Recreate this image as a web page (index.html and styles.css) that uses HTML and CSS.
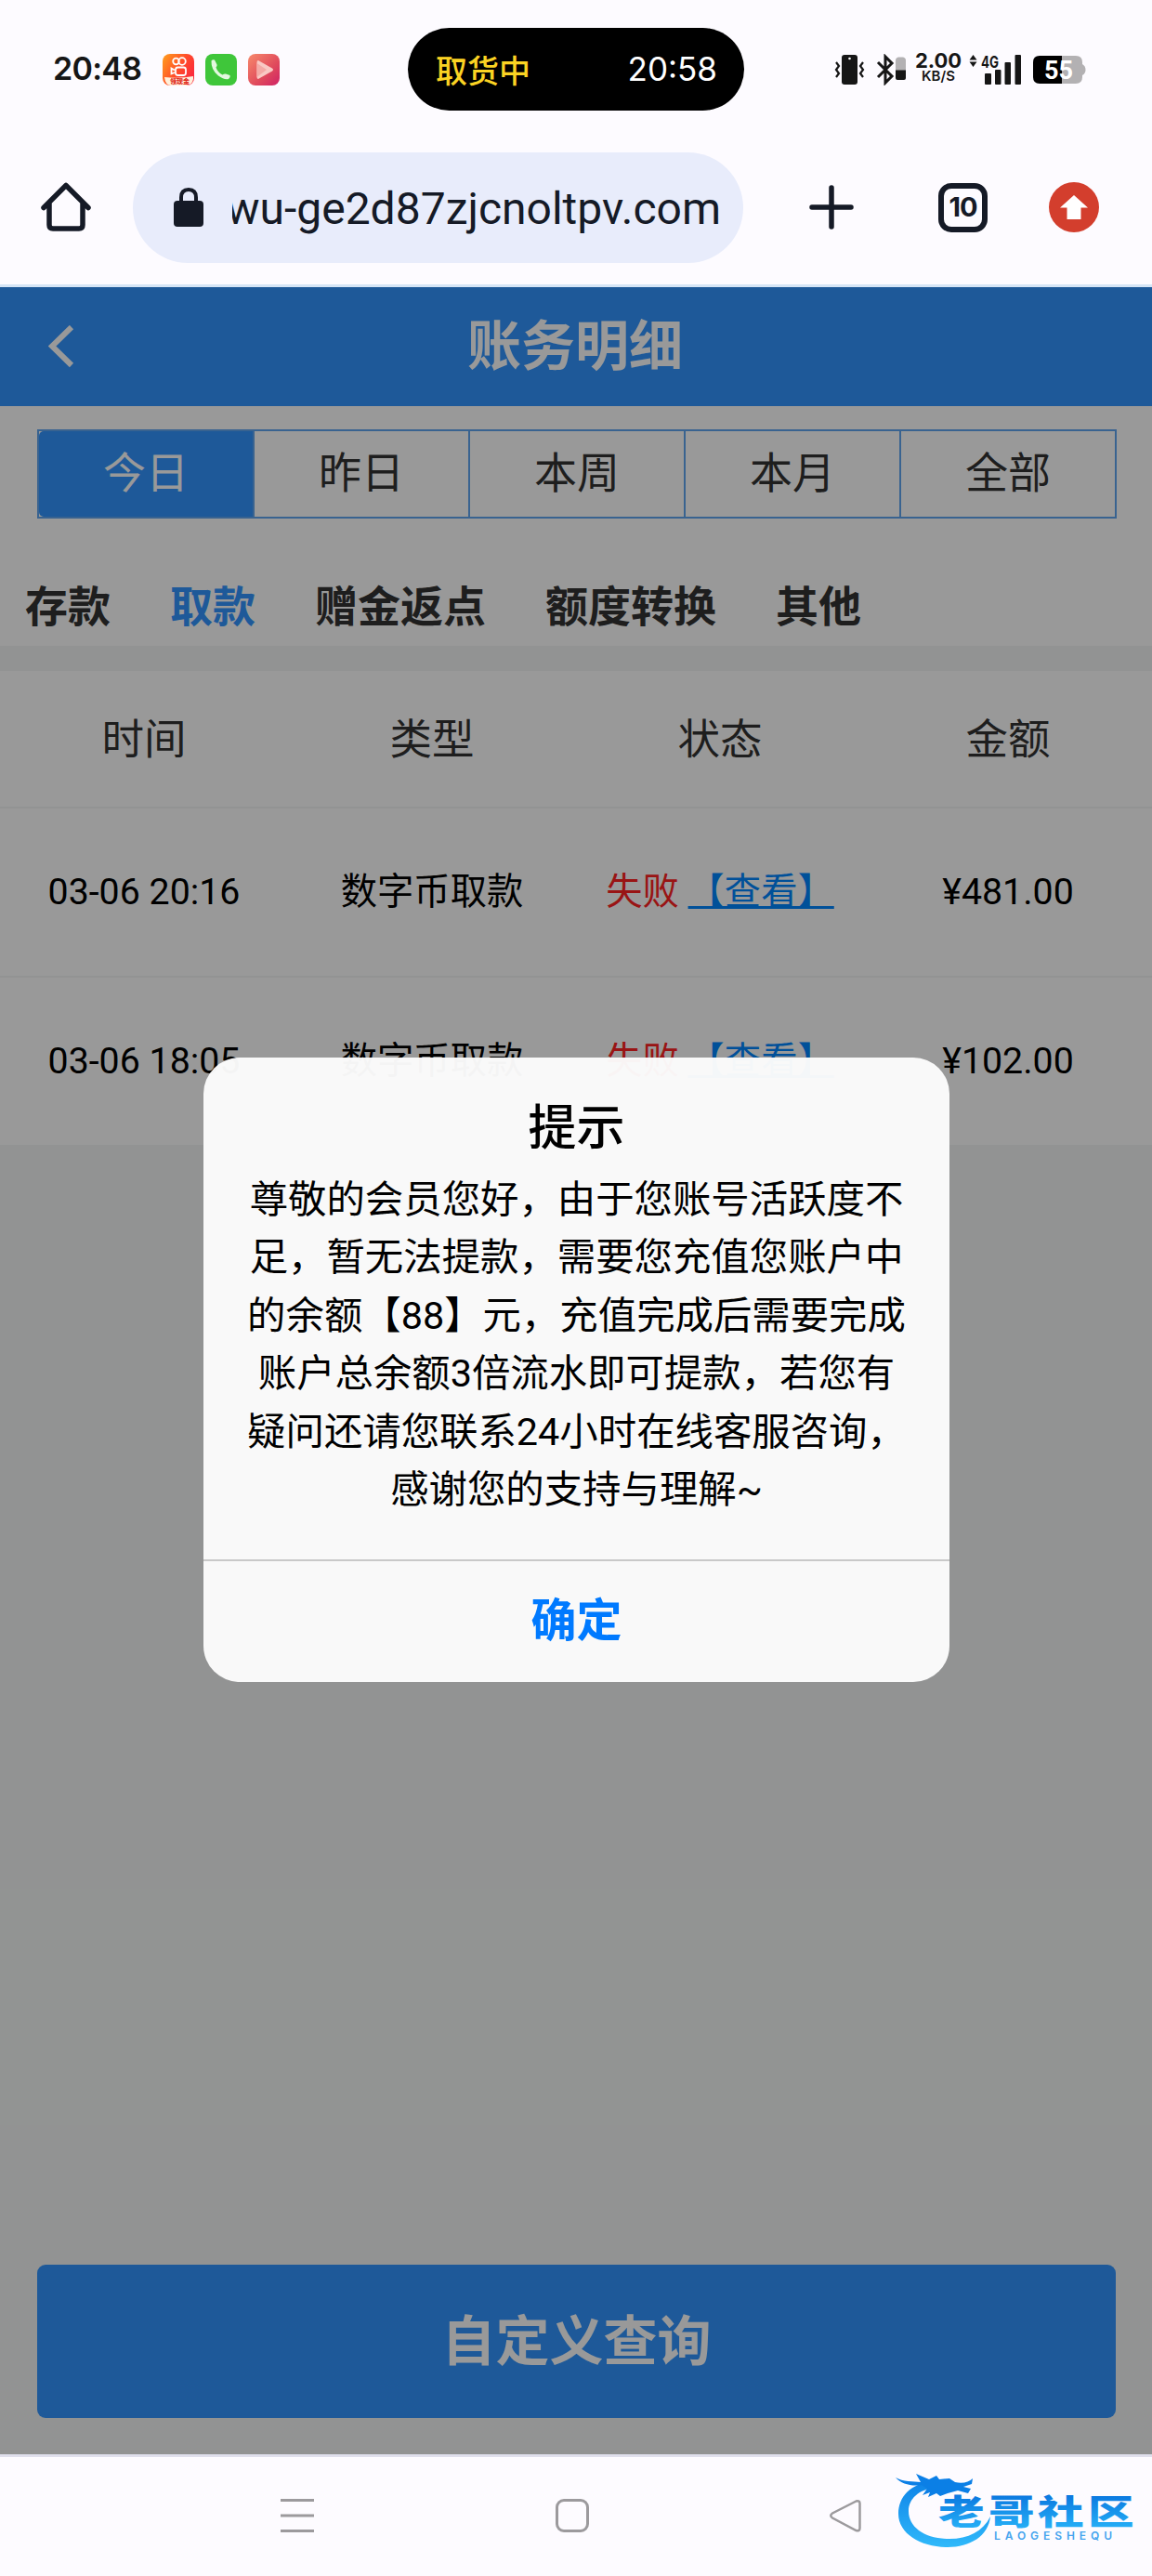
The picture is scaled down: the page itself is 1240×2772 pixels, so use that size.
FILE: index.html
```html
<!DOCTYPE html>
<html lang="zh-CN">
<head>
    <meta charset="UTF-8">
    <meta name="viewport" content="width=device-width, initial-scale=1.0">
    <title>账务明细</title>
    <link rel="stylesheet" href="styles.css">
</head>
<body>
    <div class="status-bar">
        <div class="status-left">
            <span class="clock">20:48</span>
            <svg class="app-icon" viewBox="0 0 34 34">
                <defs>
                    <linearGradient id="orange" x1="0" y1="0" x2="1" y2="0.6">
                        <stop offset="0" stop-color="#ffa01e"/>
                        <stop offset="0.6" stop-color="#ff4b2a"/>
                        <stop offset="1" stop-color="#fb2b3c"/>
                    </linearGradient>
                </defs>
                <rect width="34" height="34" rx="8" fill="url(#orange)"/>
                <g fill="none" stroke="#fff" stroke-width="1.8">
                    <circle cx="14.500" cy="8" r="3.300"/>
                    <circle cx="21" cy="8" r="3.800"/>
                    <rect x="14" y="14.500" width="11" height="8.500" rx="2.500"/>
                    <path d="M13 17.500L9.500 15.500V21.500L13 20"/>
                </g>
                <path d="M2 25Q18 27 33 24V27Q32 34 25 34H9Q3 34 2 25Z" fill="#fff0dc"/>
                <text x="8" y="32" class="app-label">领现金</text>
            </svg>
            <svg class="app-icon" viewBox="0 0 34 34">
                <rect width="34" height="34" rx="8" fill="#3fc63a"/>
                <path d="M6.500 7.500Q8 5.500 10 6.500L12.500 11.500Q13 13 11.500 14.500Q13 19.500 18.500 22.500Q20.500 21 22 21.500L26.500 23Q27.500 25 25 27Q20 28 14 23.500Q6 17 6.500 7.500Z" fill="#e3f8df"/>
            </svg>
            <svg class="app-icon" viewBox="0 0 34 34">
                <defs>
                    <linearGradient id="rose" x1="0" y1="0" x2="1" y2="1">
                        <stop offset="0" stop-color="#f78a6c"/>
                        <stop offset="0.600" stop-color="#e04a5c"/>
                        <stop offset="1" stop-color="#cf2266"/>
                    </linearGradient>
                </defs>
                <rect width="34" height="34" rx="8" fill="url(#rose)"/>
                <path d="M11 7L26 15.500Q28 17 26 18.500L11 27Q9.500 27 9.500 25V9Q9.500 7 11 7Z" fill="#f9c9c4"/>
                <path d="M9.500 10L20 17L9.500 25Z" fill="#f4aaa6"/>
            </svg>
        </div>

        <div class="island">
            <span class="island-label">取货中</span>
            <span class="island-time">20:58</span>
        </div>

        <div class="status-right">
            <svg width="33" height="34" viewBox="0 0 33 34">
                <rect x="8" y="1" width="17" height="32" rx="3" fill="#161616"/>
                <circle cx="16.500" cy="5" r="1.300" fill="#fff"/>
                <path d="M2 9L5 13L2 17L5 21L2 25M31 9L28 13L31 17L28 21L31 25" fill="none" stroke="#161616" stroke-width="2.200"/>
            </svg>
            <svg class="bluetooth" width="32" height="34" viewBox="0 0 32 34">
                <path d="M2 9L17 24L10 31V3L17 10L2 25" fill="none" stroke="#161616" stroke-width="3"/>
                <path d="M24 3.500H29Q32 4 32 7V18H21V7Q21 4 24 3.500Z" fill="#b3b1b3"/>
                <path d="M21 17.500H32V26Q32 28 30 28H23Q21 28 21 26Z" fill="#161616"/>
            </svg>
            <div class="net-speed">
                <span class="speed-value">2.00</span>
                <span class="speed-unit">KB/S</span>
            </div>
            <svg class="signal" width="57" height="34" viewBox="0 0 57 34">
                <path d="M0.500 6.500L4.500 1L8.500 6.500ZM0.500 8.500L4.500 14L8.500 8.500Z" fill="#161616"/>
                <text x="13" y="14.500" class="net-type" textLength="19" lengthAdjust="spacingAndGlyphs">4G</text>
                <rect x="17" y="21" width="7" height="12" rx="1" fill="#161616"/>
                <rect x="28" y="17" width="6.500" height="16" rx="1" fill="#161616"/>
                <rect x="38.500" y="9" width="6.500" height="24" rx="1" fill="#161616"/>
                <rect x="49.500" y="1" width="6.500" height="32" rx="1" fill="#161616"/>
            </svg>
            <svg class="battery" width="57" height="30" viewBox="0 0 57 30">
                <path d="M31 0H46Q53 0 53 7V9Q56.500 11 56.500 15T53 21V23Q53 30 46 30H31Z" fill="#b3b1b3"/>
                <path d="M31 0H7Q0 0 0 7V23Q0 30 7 30H31Z" fill="#000"/>
                <text x="27.500" y="24.500" text-anchor="middle" class="battery-text">55</text>
            </svg>
        </div>
    </div>

    <div class="browser-bar">
        <svg class="home" width="56" height="56" viewBox="0 0 56 56" fill="none" stroke="#151a26" stroke-width="5.500" stroke-linejoin="round" stroke-linecap="round">
            <path d="M4 28.500L28 4.500L52 28.500M10 24V47Q10 51 14 51H42Q46 51 46 47V24"/>
        </svg>
        <div class="url-pill">
            <svg width="32" height="42" viewBox="0 0 32 42">
                <rect x="0" y="14" width="32" height="28" rx="4" fill="#151a26"/>
                <path d="M8 15V10.500Q8 2 16 2T24 10.500V15" fill="none" stroke="#151a26" stroke-width="4"/>
            </svg>
            <div class="url"><span>wu-ge2d87zjcnoltpv.com</span></div>
        </div>
        <svg class="new-tab" width="48" height="48" viewBox="0 0 48 48" stroke="#151a26" stroke-width="5.500" stroke-linecap="round">
            <path d="M24 3V45M3 24H45"/>
        </svg>
        <div class="tab-count">10</div>
        <svg class="update" width="54" height="54" viewBox="0 0 54 54">
            <circle cx="27" cy="27" r="27" fill="#d33e2d"/>
            <path d="M27 14L42 27.500H34.500V40H19.500V27.500H12Z" fill="#fff"/>
        </svg>
    </div>

    <div class="page">
        <div class="header">
            <svg class="back" width="30" height="46" viewBox="0 0 30 46">
                <path d="M25 2L4 22.500L25 43" fill="none" stroke="#fff" stroke-width="6"/>
            </svg>
            <h1>账务明细</h1>
        </div>

        <div class="filters">
            <div class="ranges">
                <div class="range active">今日</div>
                <div class="range">昨日</div>
                <div class="range">本周</div>
                <div class="range">本月</div>
                <div class="range">全部</div>
            </div>
            <div class="tabs">
                <span>存款</span>
                <span class="active">取款</span>
                <span>赠金返点</span>
                <span>额度转换</span>
                <span>其他</span>
            </div>
        </div>

        <div class="records">
            <div class="row row-head">
                <div>时间</div>
                <div>类型</div>
                <div>状态</div>
                <div>金额</div>
            </div>
            <div class="row">
                <div>03-06 20:16</div>
                <div>数字币取款</div>
                <div><span class="failed">失败</span> <a class="view">【查看】</a></div>
                <div>¥481.00</div>
            </div>
            <div class="row">
                <div>03-06 18:05</div>
                <div>数字币取款</div>
                <div><span class="failed">失败</span> <a class="view">【查看】</a></div>
                <div>¥102.00</div>
            </div>
        </div>

        <div class="query-btn">自定义查询</div>

        <div class="overlay">
            <div class="modal">
                <h2>提示</h2>
                <p>尊敬的会员您好，由于您账号活跃度不<br>足，暂无法提款，需要您充值您账户中<br>的余额【88】元，充值完成后需要完成<br>账户总余额3倍流水即可提款，若您有<br>疑问还请您联系24小时在线客服咨询，<br>感谢您的支持与理解~</p>
                <div class="confirm">确定</div>
            </div>
        </div>
    </div>

    <div class="nav-bar">
        <svg class="nav-menu" width="36" height="36" viewBox="0 0 36 36" stroke="#9c9a9d" stroke-width="3">
            <path d="M0 1.500H36M0 18H36M0 34.500H36"/>
        </svg>
        <div class="nav-home"></div>
        <svg class="nav-back" width="36" height="36" viewBox="0 0 36 36">
            <path d="M29.500 2.500L4 15.500Q0.500 18 4 20.500L29.500 34Q33.500 35 33.500 31.500V5Q33.500 1.500 29.500 2.500Z" fill="none" stroke="#9c9a9d" stroke-width="2.500"/>
        </svg>
        <svg class="logo" width="264" height="98" viewBox="0 0 264 98">
            <defs>
                <linearGradient id="sea" gradientUnits="userSpaceOnUse" x1="0" y1="15" x2="0" y2="90">
                    <stop offset="0" stop-color="#0b7fe6"/>
                    <stop offset="1" stop-color="#2fb8fa"/>
                </linearGradient>
                <linearGradient id="word" x1="0" y1="0" x2="0" y2="1">
                    <stop offset="0.200" stop-color="#0b78df"/>
                    <stop offset="0.900" stop-color="#27b2f8"/>
                </linearGradient>
            </defs>
            <path d="M45 20C20 22 7 37 7 55C7 77 32 91 60 91C84 91 104 79 106 58C98 74 82 82 62 82C36 82 18 70 18 52C18 39 29 29 46 27Z" fill="url(#sea)"/>
            <path d="M4 16C12 21 23 20 31 21L26 12L40 18L48 14L51 18L62 17L68 21C76 23 83 21 87 17L86 23L77 26L85 28L82 33L71 30L60 33L52 36L48 33L39 37L41 32L33 35L38 28L32 24C22 26 10 23 4 16Z" fill="#0b7fe6"/>
            <g class="logo-text" fill="url(#word)">
                <text transform="translate(50 67) scale(1.340 1)">老</text>
                <text transform="translate(104 67) scale(1.340 1)">哥</text>
                <text transform="translate(157 67) scale(1.340 1)">社</text>
                <text transform="translate(211 67) scale(1.340 1)">区</text>
            </g>
            <text x="110" y="82.500" class="logo-sub" textLength="127">LAOGESHEQU</text>
        </svg>
    </div>
</body>
</html>
```
FILE: styles.css
```css
* {
    box-sizing: border-box;
}
body {
    margin: 0;
    width: 1240px;
    height: 2772px;
    background: #fdfbff;
    font-family: Roboto, "Noto Sans CJK SC", sans-serif;
    overflow: hidden;
}
svg {
    display: block;
    flex-shrink: 0;
}

/* status bar */
.status-bar {
    display: flex;
    height: 149px;
    padding-top: 30px;
}
.status-left {
    display: flex;
    align-items: center;
    width: 439px;
    height: 89px;
    padding-left: 57px;
}
.clock {
    width: 118px;
    font: 600 34px Inter, sans-serif;
    letter-spacing: -0.7px;
    color: #161616;
    margin-top: -3px;
}
.app-icon {
    width: 34px;
    height: 34px;
    margin-right: 12px;
}
.app-label {
    font: 900 7px "Noto Sans CJK SC", sans-serif;
    fill: #e02a20;
}
.island {
    display: flex;
    align-items: center;
    justify-content: space-between;
    width: 362px;
    height: 89px;
    padding: 0 29px 1px 30px;
    border-radius: 45px;
    background: #000;
}
.island-label {
    font-size: 34px;
    color: #fbd323;
    font-weight: 500;
}
.island-time {
    font: 400 35px Inter, sans-serif;
    color: #fff;
}
.status-right {
    display: flex;
    align-items: center;
    height: 89px;
    padding-left: 97px;
}
.bluetooth {
    margin-left: 12px;
}
.net-speed {
    display: flex;
    flex-direction: column;
    align-items: center;
    width: 50px;
    margin: -4px 0 0 10px;
    font-family: Inter, sans-serif;
    color: #161616;
}
.speed-value {
    font-size: 22px;
    font-weight: 700;
    line-height: 19px;
}
.speed-unit {
    font-size: 15px;
    font-weight: 600;
    line-height: 14px;
}
.signal {
    margin-left: 8px;
}
.net-type {
    font: 700 17px Inter, sans-serif;
    fill: #161616;
}
.battery {
    margin-left: 12px;
}
.battery-text {
    font: 700 27px Roboto, sans-serif;
    fill: #fff;
}

/* address bar */
.browser-bar {
    display: flex;
    align-items: center;
    height: 160px;
    padding: 0 0 9px 43px;
    border-bottom: 3px solid #d5e5f6;
}
.url-pill {
    display: flex;
    align-items: center;
    width: 657px;
    height: 119px;
    margin-left: 44px;
    padding: 0 24px 0 44px;
    border-radius: 60px;
    background: #e8ecfb;
}
.url {
    display: flex;
    justify-content: flex-end;
    flex: 1;
    margin-left: 31px;
    padding-top: 3px;
    overflow: hidden;
    font-size: 48px;
    color: #151a26;
    white-space: nowrap;
}
.new-tab {
    margin-left: 71px;
}
.tab-count {
    width: 53px;
    height: 53px;
    margin-left: 91px;
    border: 6px solid #151a26;
    border-radius: 14px;
    font: 700 29px/40px Inter, sans-serif;
    color: #151a26;
    text-align: center;
    letter-spacing: -1px;
}
.update {
    margin-left: 66px;
}

/* page */
.page {
    position: relative;
    display: flex;
    flex-direction: column;
    height: 2332px;
    background: #f4f6f5;
}
.header {
    display: flex;
    align-items: center;
    height: 128px;
    padding-left: 52px;
    background: #3295ff;
    color: #fff;
}
.header h1 {
    flex: 1;
    margin: 0 84px 1px 0;
    font-size: 58px;
    line-height: 80px;
    text-align: center;
}
.filters {
    height: 258px;
    padding-top: 25px;
    background: #fff;
    color: #333;
    font-size: 46px;
}
.ranges {
    display: flex;
    width: 1162px;
    height: 96px;
    margin-left: 40px;
    border: 2px solid #5fa5f0;
}
.range {
    flex: 1;
    line-height: 90px;
    text-align: center;
    border-right: 2px solid #5fa5f0;
}
.range:last-child {
    border-right: none;
}
.range.active {
    background: #3295ff;
    color: #fff;
    border-radius: 5px 0 0 5px;
}
.tabs {
    display: flex;
    gap: 64px;
    padding: 61px 0 0 27px;
    font-weight: 700;
    line-height: 68px;
}
.tabs .active {
    color: #3295ff;
}
.records {
    margin-top: 27px;
    background: #fff;
}
.row {
    display: grid;
    grid-template-columns: repeat(4, 310px);
    align-items: center;
    height: 182px;
    border-bottom: 2px solid #f4f6f5;
    font-size: 39.300px;
    line-height: 60px;
    text-align: center;
    color: #000;
}
.row-head {
    height: 148px;
    padding-top: 3px;
    font-size: 45.500px;
    color: #333;
}
.failed {
    color: #f22;
}
.view {
    color: #0086ff;
    text-decoration: underline;
    text-decoration-thickness: 3px;
}
.query-btn {
    height: 165px;
    margin: auto 39px 39px 40px;
    padding-top: 4px;
    border-radius: 9px;
    background: #3295ff;
    color: #fff;
    font-size: 58px;
    font-weight: 700;
    line-height: 158px;
    text-align: center;
}

/* dialog */
.overlay {
    position: absolute;
    inset: 0;
    padding: 829px 0 0 219px;
    background: rgba(0, 0, 0, 0.4);
}
.modal {
    width: 803px;
    height: 672px;
    border-radius: 39px;
    background: rgba(253, 253, 253, 0.965);
    text-align: center;
    color: #000;
}
.modal h2 {
    margin: 0;
    padding-top: 39px;
    font-size: 52px;
    font-weight: 500;
    line-height: 76px;
}
.modal p {
    height: 425px;
    margin: 0;
    padding-top: 7px;
    font-size: 41.400px;
    line-height: 62.400px;
    white-space: nowrap;
}
.confirm {
    border-top: 2px solid #c9c9c9;
    color: #007aff;
    font-size: 49px;
    font-weight: 700;
    line-height: 130px;
}

/* system navigation */
.nav-bar {
    display: flex;
    align-items: flex-start;
    height: 131px;
    border-top: 3px solid #dfdfec;
}
.nav-menu {
    margin: 45px 0 0 302px;
}
.nav-home {
    width: 36px;
    height: 36px;
    margin: 45px 0 0 260px;
    border: 3px solid #9c9a9d;
    border-radius: 9px;
}
.nav-back {
    margin: 45px 0 0 258px;
}
.logo {
    margin: 6px 0 0 32px;
}
.logo-text {
    font: 900 37px "Noto Sans CJK SC", sans-serif;
}
.logo-sub {
    font: 600 12px Inter, sans-serif;
    fill: #45a4ee;
}
```
